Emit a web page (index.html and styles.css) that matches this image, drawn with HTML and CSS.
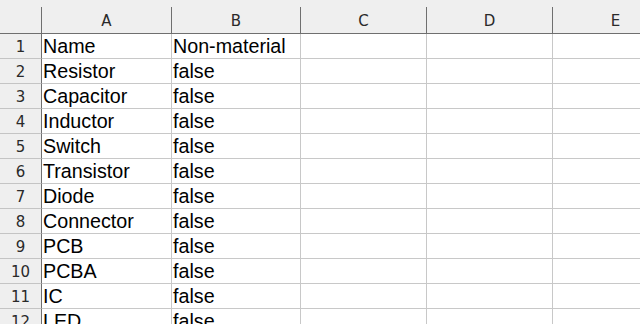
FILE: index.html
```html
<!DOCTYPE html>
<html>
<head>
<meta charset="utf-8">
<link rel="stylesheet" href="styles.css">
</head>
<body>
<div class="viewport">
<div class="sheet">
  <div class="colhead corner"><span></span></div>
  <div class="colhead"><span>A</span></div>
  <div class="colhead"><span>B</span></div>
  <div class="colhead"><span>C</span></div>
  <div class="colhead"><span>D</span></div>
  <div class="colhead"><span>E</span></div>

  <div class="rowhead">1</div><div class="cell">Name</div><div class="cell">Non-material</div><div class="cell"></div><div class="cell"></div><div class="cell"></div>
  <div class="rowhead">2</div><div class="cell">Resistor</div><div class="cell">false</div><div class="cell"></div><div class="cell"></div><div class="cell"></div>
  <div class="rowhead">3</div><div class="cell">Capacitor</div><div class="cell">false</div><div class="cell"></div><div class="cell"></div><div class="cell"></div>
  <div class="rowhead">4</div><div class="cell">Inductor</div><div class="cell">false</div><div class="cell"></div><div class="cell"></div><div class="cell"></div>
  <div class="rowhead">5</div><div class="cell">Switch</div><div class="cell">false</div><div class="cell"></div><div class="cell"></div><div class="cell"></div>
  <div class="rowhead">6</div><div class="cell">Transistor</div><div class="cell">false</div><div class="cell"></div><div class="cell"></div><div class="cell"></div>
  <div class="rowhead">7</div><div class="cell">Diode</div><div class="cell">false</div><div class="cell"></div><div class="cell"></div><div class="cell"></div>
  <div class="rowhead">8</div><div class="cell">Connector</div><div class="cell">false</div><div class="cell"></div><div class="cell"></div><div class="cell"></div>
  <div class="rowhead">9</div><div class="cell">PCB</div><div class="cell">false</div><div class="cell"></div><div class="cell"></div><div class="cell"></div>
  <div class="rowhead">10</div><div class="cell">PCBA</div><div class="cell">false</div><div class="cell"></div><div class="cell"></div><div class="cell"></div>
  <div class="rowhead">11</div><div class="cell">IC</div><div class="cell">false</div><div class="cell"></div><div class="cell"></div><div class="cell"></div>
  <div class="rowhead">12</div><div class="cell">LED</div><div class="cell">false</div><div class="cell"></div><div class="cell"></div><div class="cell"></div>
</div>
</div>
</body>
</html>
```
FILE: styles.css
```css
html, body {
  margin: 0;
  padding: 0;
  background: #ffffff;
  overflow: hidden;
}
.viewport {
  width: 640px;
  height: 324px;
  overflow: hidden;
}
.sheet {
  display: grid;
  grid-template-columns: 42px 130px 129px 126px 126px 126px;
  grid-auto-rows: 25px;
  grid-template-rows: 34px;
  width: 679px;
}
.colhead {
  background: #efefef;
  border-bottom: 1px solid #6f6f6f;
  display: flex;
  align-items: flex-end;
  height: 34px;
  box-sizing: border-box;
}
.colhead span {
  display: flex;
  align-items: center;
  justify-content: center;
  flex: 1;
  height: 26px;
  border-right: 1px solid #6f6f6f;
  font-family: "DejaVu Sans", sans-serif;
  font-size: 15px;
  color: #2a2a2a;
  padding-top: 1px;
  box-sizing: border-box;
}
.rowhead {
  background: #efefef;
  border-right: 1px solid #6f6f6f;
  border-bottom: 1px solid #c4c4c4;
  display: flex;
  align-items: center;
  justify-content: center;
  font-family: "DejaVu Sans", sans-serif;
  font-size: 15px;
  color: #2a2a2a;
  box-sizing: border-box;
  padding-top: 1px;
}
.cell {
  border-right: 1px solid #c8c8c8;
  border-bottom: 1px solid #c8c8c8;
  font-family: "Liberation Sans", Arial, sans-serif;
  font-size: 19.7px;
  line-height: 24px;
  color: #000;
  padding-left: 1px;
  white-space: nowrap;
  overflow: visible;
  box-sizing: border-box;
}
```
